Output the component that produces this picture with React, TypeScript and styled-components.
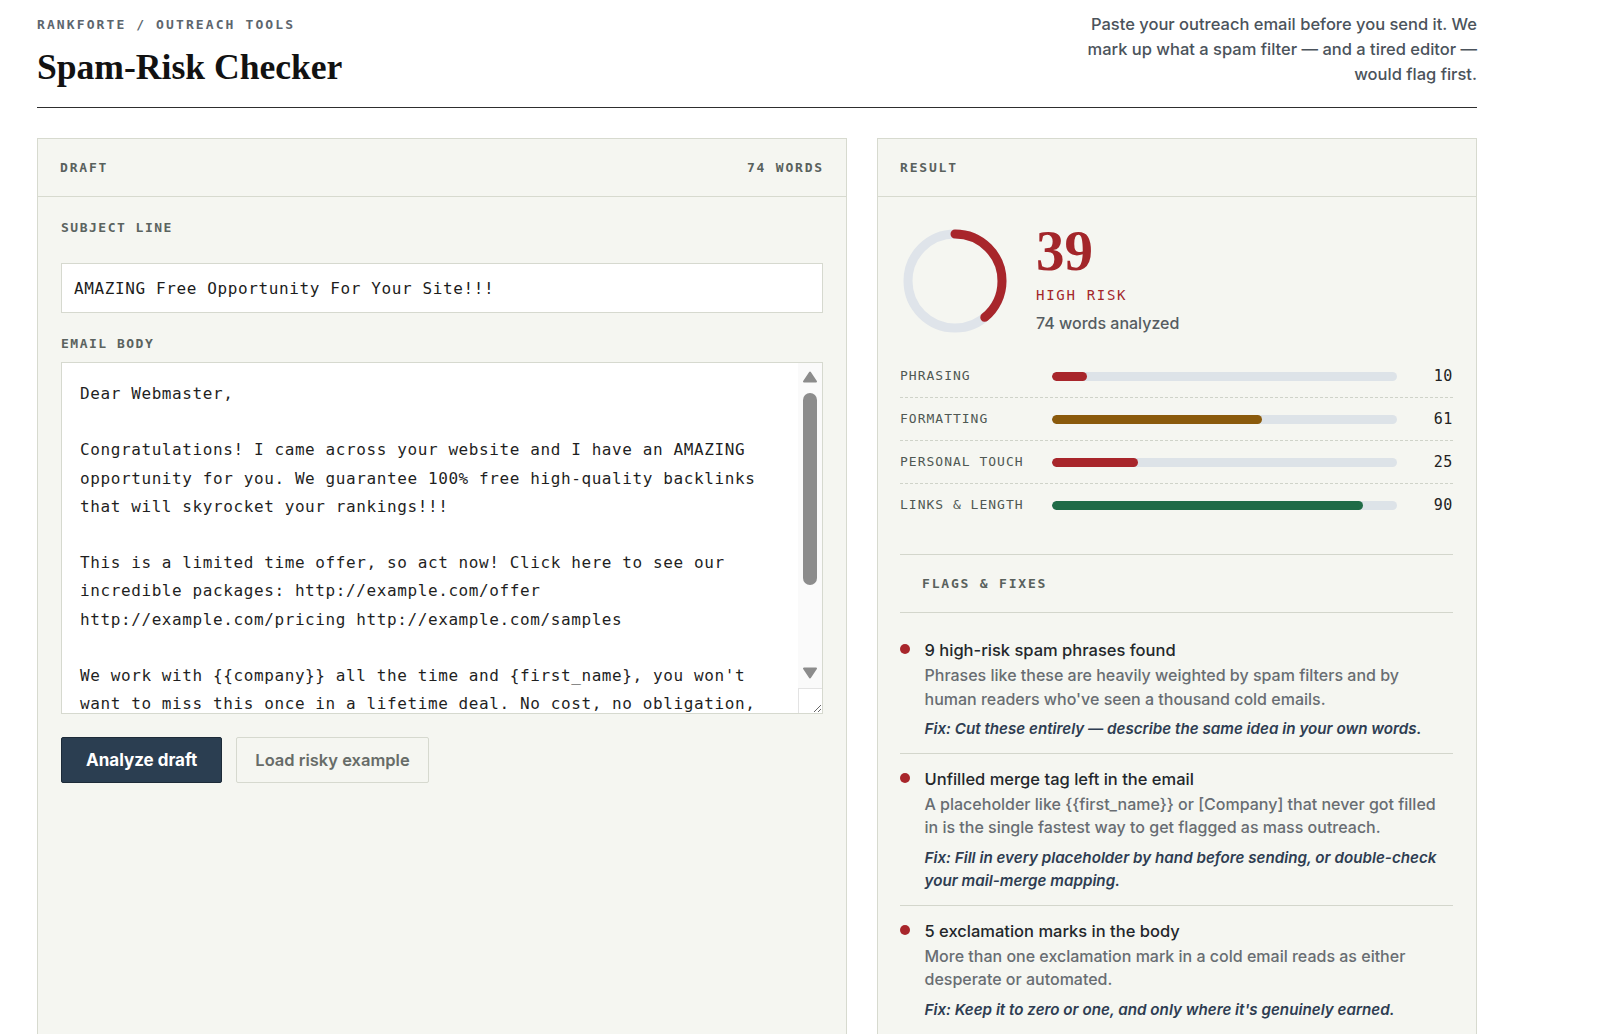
import React from "react";
import styled, { createGlobalStyle } from "styled-components";

const mono = `"DejaVu Sans Mono", "Liberation Mono", monospace`;
const sans = `Inter, "Noto Sans", "Liberation Sans", sans-serif`;
const serif = `"Liberation Serif", "DejaVu Serif", serif`;

const Global = createGlobalStyle`
  html, body { margin: 0; padding: 0; background: #ffffff; overflow: hidden; }
  body { font-family: ${sans}; color: #1f2328; }
  *, *::before, *::after { box-sizing: border-box; }
`;

const Page = styled.div`
  width: 1440px;
  margin-left: 37px;
  padding-top: 11px;
`;

const Header = styled.header`
  display: flex;
  justify-content: space-between;
  align-items: flex-start;
  padding-bottom: 19px;
  border-bottom: 1.5px solid #2e2e2e;
`;

const TitleBlock = styled.div`
  display: flex;
  flex-direction: column;
  gap: 12px;
  padding-top: 4px;
`;

const Crumb = styled.div`
  font-family: ${mono};
  font-size: 13px;
  line-height: 19px;
  letter-spacing: 2.1px;
  font-weight: 700;
  color: #5d666e;
`;

const Title = styled.h1`
  margin: 0;
  font-family: ${serif};
  font-size: 35.6px;
  line-height: 42px;
  font-weight: 700;
  color: #121212;
`;

const Intro = styled.p`
  margin: 1px 0 0;
  width: 400px;
  text-align: right;
  font-size: 16.5px;
  line-height: 25px;
  font-weight: 500;
  color: #4b535b;
`;

const Columns = styled.main`
  display: grid;
  grid-template-columns: minmax(0, 1fr) 600px;
  gap: 30px;
  margin-top: 30px;
  align-items: stretch;
`;

const Panel = styled.section`
  background: #f5f6f1;
  border: 1px solid #d7dacf;
  display: flex;
  flex-direction: column;
`;

const PanelHead = styled.div`
  height: 58px;
  padding: 0 22px;
  display: flex;
  align-items: center;
  justify-content: space-between;
  border-bottom: 1px solid #d7dacf;
`;

const HeadLabel = styled.span`
  font-family: ${mono};
  font-size: 13px;
  line-height: 18px;
  letter-spacing: 1.8px;
  font-weight: 700;
  color: #59615d;
`;

const DraftBody = styled.div`
  padding: 22px 23px 24px 23px;
  display: flex;
  flex-direction: column;
`;

const FieldLabel = styled.label<{ $gap: number }>`
  font-family: ${mono};
  font-size: 13px;
  line-height: 17px;
  letter-spacing: 1.5px;
  font-weight: 700;
  color: #5b635f;
  margin-bottom: ${(p) => p.$gap}px;
`;

const SubjectInput = styled.input`
  width: 100%;
  height: 50px;
  padding: 0 12px;
  background: #ffffff;
  border: 1px solid #d6d9cf;
  border-radius: 0;
  font-family: ${mono};
  font-size: 16px;
  letter-spacing: 0.62px;
  color: #1c1c1c;
  outline: none;
  margin-bottom: 22px;
`;

const EditorBox = styled.div`
  position: relative;
`;

const BodyArea = styled.textarea`
  width: 100%;
  height: 352px;
  padding: 17px 52px 17px 18px;
  background: #ffffff;
  border: 1px solid #d6d9cf;
  border-radius: 0;
  font-family: ${mono};
  font-size: 16px;
  line-height: 28.2px;
  letter-spacing: 0.6px;
  color: #1f1f1f;
  resize: vertical;
  outline: none;
  display: block;
  scrollbar-width: none;
`;

const ScrollRail = styled.div`
  position: absolute;
  top: 1px;
  right: 1px;
  width: 24px;
  height: 325px;
  background: #fafafa;
  pointer-events: none;
`;

const ScrollThumb = styled.div`
  position: absolute;
  left: 5px;
  top: 30px;
  width: 14px;
  height: 192px;
  border-radius: 7px;
  background: #8c8c8c;
`;

const ArrowIcon = styled.svg<{ $top: number }>`
  position: absolute;
  left: 4px;
  top: ${(p) => p.$top}px;
`;

const ScrollCorner = styled.div`
  position: absolute;
  right: 1px;
  bottom: 1px;
  width: 24px;
  height: 25px;
  border-left: 1px solid #e3e3e3;
  border-top: 1px solid #e3e3e3;
  pointer-events: none;
`;

const Actions = styled.div`
  display: flex;
  gap: 14px;
  margin-top: 23px;
`;

const PrimaryButton = styled.button`
  height: 46px;
  padding: 0 24px;
  background: #2b3e51;
  border: 1px solid #1d2b39;
  border-radius: 2px;
  color: #ffffff;
  font-family: ${sans};
  font-size: 17px;
  font-weight: 700;
  cursor: pointer;
`;

const GhostButton = styled.button`
  height: 46px;
  padding: 0 18px;
  background: transparent;
  border: 1px solid #d6d9cf;
  border-radius: 2px;
  color: #676c68;
  font-family: ${sans};
  font-size: 16.5px;
  font-weight: 600;
  cursor: pointer;
`;

const ResultBody = styled.div`
  padding: 26px 23px 0 22px;
`;

const Summary = styled.div`
  display: flex;
  align-items: flex-start;
  gap: 26px;
`;

const RingSvg = styled.svg`
  flex: none;
  margin-top: 3px;
`;

const ScoreText = styled.div`
  display: flex;
  flex-direction: column;
`;

const ScoreNumber = styled.div`
  font-family: ${serif};
  font-size: 57px;
  line-height: 56px;
  font-weight: 700;
  color: #a3262a;
`;

const RiskLabel = styled.div`
  margin-top: 7px;
  font-family: ${mono};
  font-size: 14px;
  line-height: 18px;
  letter-spacing: 1.7px;
  color: #a3262a;
`;

const WordsNote = styled.div`
  margin-top: 8px;
  font-size: 16px;
  line-height: 22px;
  font-weight: 500;
  color: #555c61;
`;

const Bars = styled.div`
  margin-top: 19px;
`;

const BarRow = styled.div`
  display: grid;
  grid-template-columns: 152px minmax(0, 1fr) 56px;
  align-items: center;
  padding: 12px 0;
  border-bottom: 1px dashed #cfd3c9;
  &:last-child {
    border-bottom: none;
  }
`;

const BarLabel = styled.span`
  font-family: ${mono};
  font-size: 13px;
  line-height: 18px;
  letter-spacing: 1px;
  color: #4f5853;
`;

const Track = styled.div`
  height: 9px;
  border-radius: 5px;
  background: #dde3e8;
  overflow: hidden;
`;

const Fill = styled.div<{ $color: string }>`
  height: 100%;
  border-radius: 5px;
  background: ${(p) => p.$color};
`;

const BarValue = styled.span`
  font-family: ${mono};
  font-size: 15px;
  line-height: 18px;
  letter-spacing: 0.6px;
  color: #222;
  text-align: right;
`;

const Flags = styled.div`
  margin-top: 28px;
  border-top: 1px solid #d3d6cc;
`;

const FlagsHead = styled.div`
  height: 58px;
  padding: 0 22px;
  display: flex;
  align-items: center;
  border-bottom: 1px solid #d3d6cc;
`;

const FlagList = styled.ul`
  list-style: none;
  margin: 0;
  padding: 12.5px 0 0;
`;

const FlagItem = styled.li`
  display: grid;
  grid-template-columns: 24.5px minmax(0, 1fr);
  padding: 12.5px 0;
  border-bottom: 1px solid #d3d6cc;
`;

const Bullet = styled.span`
  width: 10px;
  height: 10px;
  margin-top: 6px;
  border-radius: 50%;
  background: #a8262b;
`;

const FlagText = styled.div`
  display: flex;
  flex-direction: column;
  padding-right: 13px;
`;

const FlagTitle = styled.div`
  font-size: 16.5px;
  line-height: 24px;
  font-weight: 500;
  color: #23272b;
  margin-bottom: 2px;
`;

const FlagDesc = styled.div`
  font-size: 16px;
  line-height: 23.5px;
  font-weight: 500;
  color: #686d72;
`;

const FlagFix = styled.div`
  margin-top: 6px;
  font-size: 15.2px;
  line-height: 23.5px;
  font-style: italic;
  font-weight: 600;
  color: #2e3d52;
`;

const emailText = `Dear Webmaster,

Congratulations! I came across your website and I have an AMAZING opportunity for you. We guarantee 100% free high-quality backlinks that will skyrocket your rankings!!!

This is a limited time offer, so act now! Click here to see our incredible packages: http://example.com/offer http://example.com/pricing http://example.com/samples

We work with {{company}} all the time and {first_name}, you won't want to miss this once in a lifetime deal. No cost, no obligation, just results.

Best regards,
Mark`;

const scores = [
  { label: "PHRASING", value: 10, color: "#a8262b" },
  { label: "FORMATTING", value: 61, color: "#8a5a0c" },
  { label: "PERSONAL TOUCH", value: 25, color: "#a8262b" },
  { label: "LINKS & LENGTH", value: 90, color: "#1f6b47" },
];

const flags = [
  {
    title: "9 high-risk spam phrases found",
    desc: "Phrases like these are heavily weighted by spam filters and by human readers who've seen a thousand cold emails.",
    fix: "Fix: Cut these entirely — describe the same idea in your own words.",
  },
  {
    title: "Unfilled merge tag left in the email",
    desc: "A placeholder like {{first_name}} or [Company] that never got filled in is the single fastest way to get flagged as mass outreach.",
    fix: "Fix: Fill in every placeholder by hand before sending, or double-check your mail-merge mapping.",
  },
  {
    title: "5 exclamation marks in the body",
    desc: "More than one exclamation mark in a cold email reads as either desperate or automated.",
    fix: "Fix: Keep it to zero or one, and only where it's genuinely earned.",
  },
  {
    title: "Shouting in capitals",
    desc: "Words like AMAZING in all caps trip filters and make the pitch feel like an ad.",
    fix: "Fix: Use sentence case and let the offer speak for itself.",
  },
];

const Ring: React.FC<{ score: number }> = ({ score }) => {
  const r = 47;
  const c = 2 * Math.PI * r;
  return (
    <RingSvg width={110} height={110} viewBox="0 0 110 110">
      <circle cx={55} cy={55} r={r} fill="none" stroke="#dfe4ea" strokeWidth={9} />
      <circle
        cx={55}
        cy={55}
        r={r}
        fill="none"
        stroke="#a8262b"
        strokeWidth={9}
        strokeLinecap="round"
        strokeDasharray={`${(c * score) / 100} ${c}`}
        transform="rotate(-90 55 55)"
      />
    </RingSvg>
  );
};

const Arrow: React.FC<{ top: number; down?: boolean }> = ({ top, down }) => (
  <ArrowIcon $top={top} width={16} height={12} viewBox="0 0 16 12">
    <polygon
      points={down ? "2,1.5 14,1.5 8,10.5" : "2,10.5 14,10.5 8,1.5"}
      fill="#8c8c8c"
      stroke="#8c8c8c"
      strokeWidth={2}
      strokeLinejoin="round"
    />
  </ArrowIcon>
);

export default function App() {
  return (
    <>
      <Global />
      <Page>
        <Header>
          <TitleBlock>
            <Crumb>RANKFORTE / OUTREACH TOOLS</Crumb>
            <Title>Spam-Risk Checker</Title>
          </TitleBlock>
          <Intro>
            Paste your outreach email before you send it. We mark up what a spam filter — and a tired editor — would flag first.
          </Intro>
        </Header>

        <Columns>
          <Panel>
            <PanelHead>
              <HeadLabel>DRAFT</HeadLabel>
              <HeadLabel>74 WORDS</HeadLabel>
            </PanelHead>
            <DraftBody>
              <FieldLabel $gap={27}>SUBJECT LINE</FieldLabel>
              <SubjectInput defaultValue="AMAZING Free Opportunity For Your Site!!!" />
              <FieldLabel $gap={10}>EMAIL BODY</FieldLabel>
              <EditorBox>
                <BodyArea defaultValue={emailText} spellCheck={false} />
                <ScrollRail aria-hidden="true">
                  <Arrow top={8} />
                  <ScrollThumb />
                  <Arrow top={304} down />
                </ScrollRail>
                <ScrollCorner aria-hidden="true" />
              </EditorBox>
              <Actions>
                <PrimaryButton>Analyze draft</PrimaryButton>
                <GhostButton>Load risky example</GhostButton>
              </Actions>
            </DraftBody>
          </Panel>

          <Panel>
            <PanelHead>
              <HeadLabel>RESULT</HeadLabel>
            </PanelHead>
            <ResultBody>
              <Summary>
                <Ring score={39} />
                <ScoreText>
                  <ScoreNumber>39</ScoreNumber>
                  <RiskLabel>HIGH RISK</RiskLabel>
                  <WordsNote>74 words analyzed</WordsNote>
                </ScoreText>
              </Summary>

              <Bars>
                {scores.map((s) => (
                  <BarRow key={s.label}>
                    <BarLabel>{s.label}</BarLabel>
                    <Track>
                      <Fill $color={s.color} style={{ width: `${s.value}%` }} />
                    </Track>
                    <BarValue>{s.value}</BarValue>
                  </BarRow>
                ))}
              </Bars>

              <Flags>
                <FlagsHead>
                  <HeadLabel>FLAGS &amp; FIXES</HeadLabel>
                </FlagsHead>
                <FlagList>
                  {flags.map((f) => (
                    <FlagItem key={f.title}>
                      <Bullet />
                      <FlagText>
                        <FlagTitle>{f.title}</FlagTitle>
                        <FlagDesc>{f.desc}</FlagDesc>
                        <FlagFix>{f.fix}</FlagFix>
                      </FlagText>
                    </FlagItem>
                  ))}
                </FlagList>
              </Flags>
            </ResultBody>
          </Panel>
        </Columns>
      </Page>
    </>
  );
}
